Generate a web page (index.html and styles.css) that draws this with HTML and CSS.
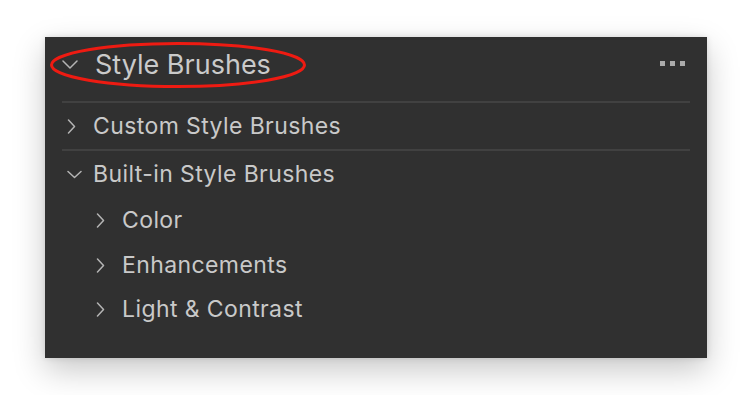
FILE: index.html
```html
<!DOCTYPE html>
<html lang="en">
<head>
    <meta charset="UTF-8">
    <title>Style Brushes</title>
    <link rel="stylesheet" href="styles.css">
</head>
<body>
    <section class="panel">
        <header class="panel-header">
            <svg class="chev chev-lg" width="16" height="9" viewBox="0 0 16 9"><path d="M1 1l7 7 7-7" /></svg>
            <h1>Style Brushes</h1>
            <div class="more"><span></span><span></span><span></span></div>
            <svg class="mark" width="260" height="52" viewBox="0 0 260 52"><ellipse cx="130" cy="25" rx="126.5" ry="21.5" /></svg>
        </header>

        <div class="row top">
            <svg class="chev" width="9" height="15" viewBox="0 0 9 15"><path d="M1.5 1l6 6.5-6 6.5" /></svg>
            <span>Custom Style Brushes</span>
        </div>

        <div class="group">
            <div class="row top open">
                <svg class="chev" width="15" height="9" viewBox="0 0 15 9"><path d="M1 1.5l6.5 6 6.5-6" /></svg>
                <span>Built-in Style Brushes</span>
            </div>
            <div class="row sub first">
                <svg class="chev" width="9" height="15" viewBox="0 0 9 15"><path d="M1.5 1l6 6.5-6 6.5" /></svg>
                <span>Color</span>
            </div>
            <div class="row sub">
                <svg class="chev" width="9" height="15" viewBox="0 0 9 15"><path d="M1.5 1l6 6.5-6 6.5" /></svg>
                <span>Enhancements</span>
            </div>
            <div class="row sub">
                <svg class="chev" width="9" height="15" viewBox="0 0 9 15"><path d="M1.5 1l6 6.5-6 6.5" /></svg>
                <span>Light &amp; Contrast</span>
            </div>
        </div>
    </section>
</body>
</html>
```

FILE: styles.css
```css
* {
    margin: 0;
    padding: 0;
    box-sizing: border-box;
}

body {
    font-family: Inter, 'Noto Sans', sans-serif;
    background-color: #ffffff;
    padding: 37px 45px;
}

.panel {
    width: 662px;
    height: 321px;
    background-color: #303030;
    padding: 0 17px;
    box-shadow: 0 12px 30px rgba(0,0,0,0.22), 0 0 6px rgba(0,0,0,0.12);
    color: #c9c9c9;
}

.chev path {
    fill: none;
    stroke: #b4b4b4;
    stroke-width: 1.5;
    stroke-linecap: round;
    stroke-linejoin: round;
}

.panel-header {
    position: relative;
    height: 66px;
    display: flex;
    align-items: center;
    padding-right: 5px;
    padding-bottom: 10px;
    border-bottom: 2px solid #414141;
}

.panel-header h1 {
    font-size: 27px;
    font-weight: 400;
    margin-left: 17px;
    flex: 1;
    color: #cacaca;
}

.chev-lg {
    margin-top: 1px;
}

.more {
    display: flex;
    gap: 5px;
    margin-top: -2px;
}

.more span {
    width: 5px;
    height: 5px;
    background: #ababab;
}

.mark {
    position: absolute;
    left: -14px;
    top: 3px;
    pointer-events: none;
}

.mark ellipse {
    fill: none;
    stroke: #ee1b12;
    stroke-width: 3;
}

.row {
    display: flex;
    align-items: center;
    font-size: 23px;
    letter-spacing: 0.4px;
}

.row.top {
    height: 48px;
    padding-left: 5px;
    border-bottom: 2px solid #414141;
}

.row.top span {
    margin-left: 17px;
}

.row.top.open {
    height: 46px;
    border-bottom: none;
}

.row.top.open span {
    margin-left: 11px;
}

.row.sub {
    height: 44px;
    padding-left: 34px;
}

.row.sub.first {
    height: 46px;
}

.row.sub span {
    margin-left: 17px;
}
```
